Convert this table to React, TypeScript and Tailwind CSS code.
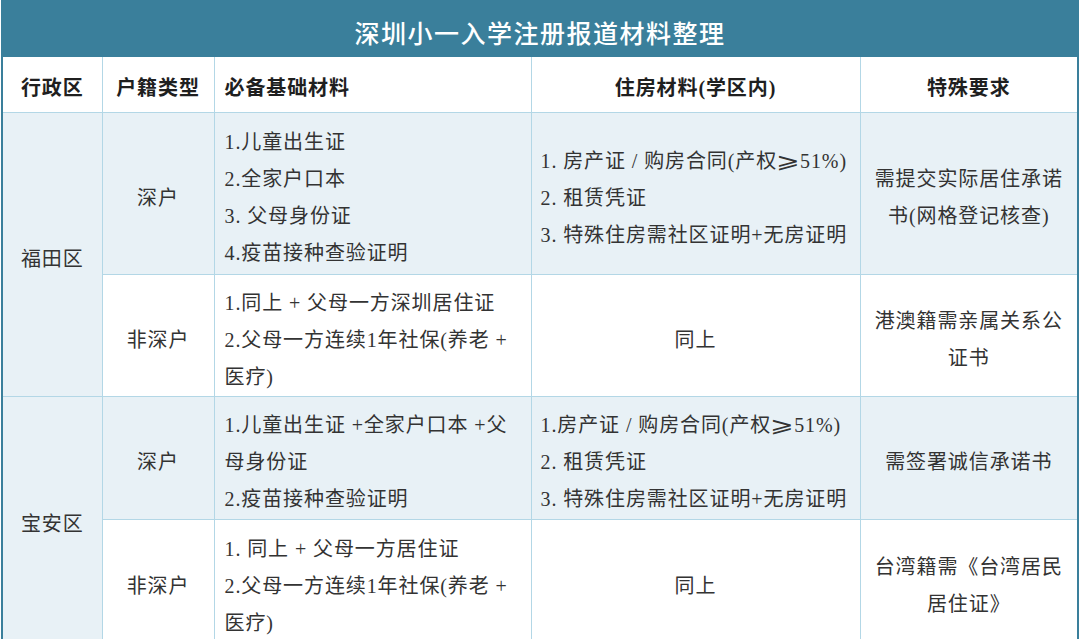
import React from "react";

const FONT = "font-['Liberation_Serif','Noto_Sans_CJK_SC',serif]";
const B = "border border-[#b3d7e6] pt-[10px]";
const H = "border border-[#b3d7e6] pt-[8px] font-bold";

function Lines({ items }: { items: React.ReactNode[] }) {
  return (
    <>
      {items.map((t, i) => (
        <div key={i} className="whitespace-nowrap">
          {t}
        </div>
      ))}
    </>
  );
}

function Ge() {
  return (
    <span className="inline-block mx-[2px] scale-x-[1.35] font-['DejaVu_Sans',sans-serif] text-[21px] font-light">
      ⩾
    </span>
  );
}

export default function App() {
  const light = "bg-[#e8f1f6]";
  return (
    <div className={`w-[1080px] h-[639px] overflow-hidden bg-white ${FONT}`}>
      <div className="ml-[1px] w-[1078px] border-x-2 border-[#3a7f9b]">
        <div className="h-[57px] bg-[#3a7f9b] flex items-center justify-center pt-[8px] text-white text-[25px] tracking-[1.5px] font-['Noto_Sans_CJK_SC',sans-serif] font-medium">
          深圳小一入学注册报道材料整理
        </div>
        <table className="w-full border-collapse table-fixed text-[20px] leading-[37px] tracking-[0.9px] text-[#333]">
          <colgroup>
            <col className="w-[99px]" />
            <col className="w-[112px]" />
            <col className="w-[317px]" />
            <col className="w-[329px]" />
            <col />
          </colgroup>
          <thead>
            <tr className="h-[55px] bg-white text-[#1f1f1f]">
              <th className={`${H} border-l-0 border-t-0 text-center`}>行政区</th>
              <th className={`${H} border-t-0 text-center`}>户籍类型</th>
              <th className={`${H} border-t-0 text-left pl-[10px]`}>必备基础材料</th>
              <th className={`${H} border-t-0 text-center`}>住房材料(学区内)</th>
              <th className={`${H} border-r-0 border-t-0 text-center`}>特殊要求</th>
            </tr>
          </thead>
          <tbody>
            <tr className={`h-[162px] ${light}`}>
              <td rowSpan={2} className={`${B} border-l-0 ${light} text-center align-middle`}>福田区</td>
              <td className={`${B} text-center`}>深户</td>
              <td className={`${B} pl-[10px] align-middle`}>
                <Lines items={["1.儿童出生证", "2.全家户口本", "3. 父母身份证", "4.疫苗接种查验证明"]} />
              </td>
              <td className={`${B} pl-[9px] align-middle`}>
                <Lines
                  items={[
                    <>1. 房产证 / 购房合同(产权<Ge />51%)</>,
                    "2. 租赁凭证",
                    "3. 特殊住房需社区证明+无房证明",
                  ]}
                />
              </td>
              <td className={`${B} border-r-0 text-center align-middle`}>
                <Lines items={["需提交实际居住承诺", "书(网格登记核查)"]} />
              </td>
            </tr>
            <tr className="h-[121px] bg-white">
              <td className={`${B} text-center`}>非深户</td>
              <td className={`${B} pl-[10px] align-middle`}>
                <Lines items={["1.同上 + 父母一方深圳居住证", "2.父母一方连续1年社保(养老 +", "医疗)"]} />
              </td>
              <td className={`${B} text-center`}>同上</td>
              <td className={`${B} border-r-0 text-center align-middle`}>
                <Lines items={["港澳籍需亲属关系公", "证书"]} />
              </td>
            </tr>
            <tr className={`h-[123px] ${light}`}>
              <td rowSpan={2} className={`${B} border-l-0 ${light} text-center align-middle`}>宝安区</td>
              <td className={`${B} text-center`}>深户</td>
              <td className={`${B} pl-[10px] align-middle`}>
                <Lines items={["1.儿童出生证 +全家户口本 +父", "母身份证", "2.疫苗接种查验证明"]} />
              </td>
              <td className={`${B} pl-[9px] align-middle`}>
                <Lines
                  items={[
                    <>1.房产证 / 购房合同(产权<Ge />51%)</>,
                    "2. 租赁凭证",
                    "3. 特殊住房需社区证明+无房证明",
                  ]}
                />
              </td>
              <td className={`${B} border-r-0 text-center align-middle`}>需签署诚信承诺书</td>
            </tr>
            <tr className="h-[124px] bg-white">
              <td className={`${B} text-center`}>非深户</td>
              <td className={`${B} pl-[10px] align-middle`}>
                <Lines items={["1. 同上 + 父母一方居住证", "2.父母一方连续1年社保(养老 +", "医疗)"]} />
              </td>
              <td className={`${B} text-center`}>同上</td>
              <td className={`${B} border-r-0 text-center align-middle`}>
                <Lines items={["台湾籍需《台湾居民", "居住证》"]} />
              </td>
            </tr>
          </tbody>
        </table>
      </div>
    </div>
  );
}
